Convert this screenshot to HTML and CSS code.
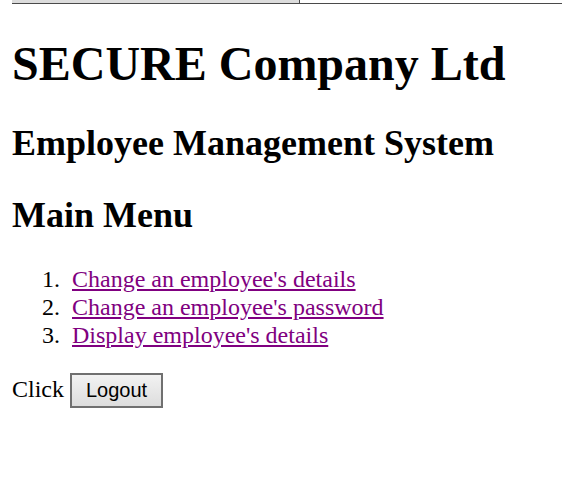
FILE: index.html
```html
<!DOCTYPE html>
<html>
<head>
<meta charset="utf-8">
<title>Main Menu</title>
<link rel="stylesheet" href="styles.css">
</head>
<body>
<div class="topframe"><div class="topbox"></div></div>
<h1>SECURE Company Ltd</h1>
<h2 class="subtitle">Employee Management System</h2>
<h2 class="section">Main Menu</h2>
<ol class="menu">
<li><a href="#">Change an employee's details</a></li>
<li><a href="#">Change an employee's password</a></li>
<li><a href="#">Display employee's details</a></li>
</ol>
<p class="logout">Click <button class="btn" type="button">Logout</button></p>
</body>
</html>
```
FILE: styles.css
```css
html, body {
  background: #ffffff;
}
body {
  margin: 0 12px 12px 12px;
  font-family: "Liberation Serif", "Times New Roman", serif;
  font-size: 24px;
  color: #000;
}
.topframe {
  margin: 0 -12px;
  height: 3px;
  border-bottom: 1px solid #4a4a4a;
}
.topbox {
  width: 300px;
  height: 3px;
  background: #dcdcdc;
  border-left: 1px solid #4a4a4a;
  border-right: 1px solid #4a4a4a;
  box-sizing: border-box;
}
h1 {
  font-size: 48px;
  font-weight: bold;
  margin: 32px 0 31px;
}
h2 {
  font-size: 36px;
  font-weight: bold;
}
.subtitle {
  margin: 31px 0 30px;
}
.section {
  margin: 30px 0 28.5px;
}
.menu {
  margin: 28.5px 0 24px;
  padding-left: 60px;
  list-style: none;
  counter-reset: item;
}
.menu li {
  line-height: 28px;
  counter-increment: item;
}
.menu li::before {
  content: counter(item) ".";
  display: inline-block;
  width: 40px;
  margin-left: -52px;
  margin-right: 12px;
  text-align: right;
}
.menu a {
  color: #800080;
  text-decoration: underline;
}
.logout {
  margin: 24px 0;
}
.btn {
  font-family: "Liberation Sans", Arial, sans-serif;
  font-size: 20px;
  color: #000;
  height: 35px;
  width: 93px;
  padding: 0;
  border: 2px solid #707070;
  background: linear-gradient(#f2f2f2, #dddddd);
  border-radius: 0;
  vertical-align: baseline;
}
```
